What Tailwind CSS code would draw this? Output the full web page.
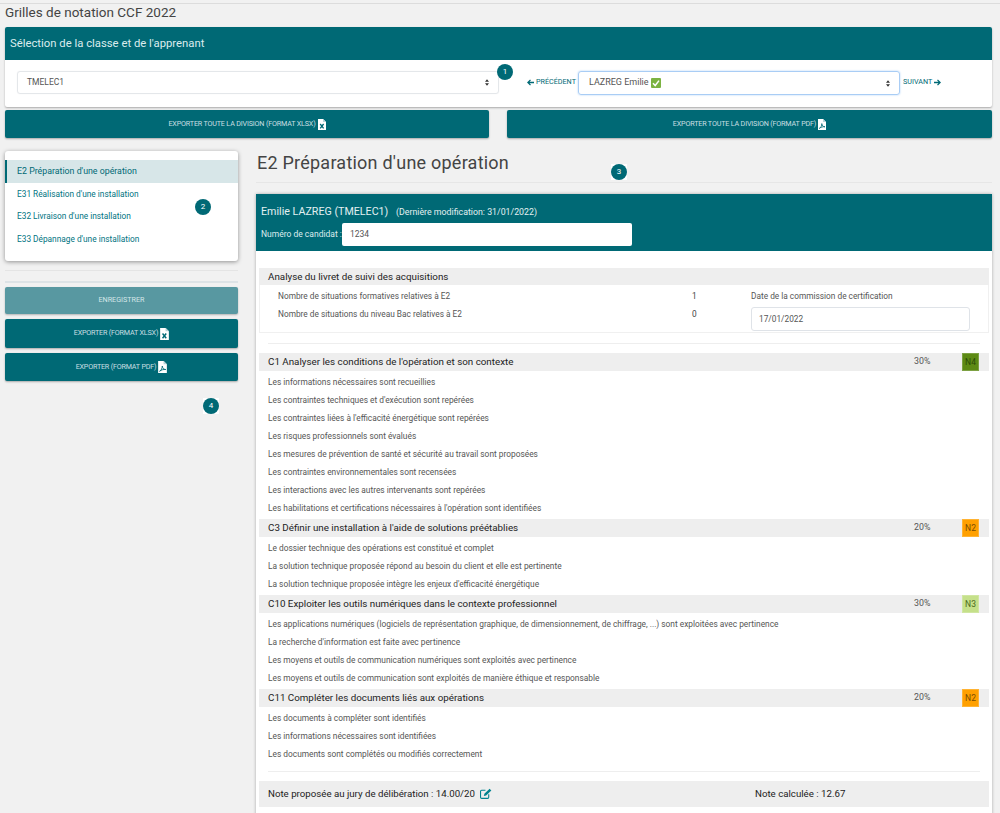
<!DOCTYPE html>
<html lang="fr">
<head>
<meta charset="utf-8"/>
<title>Grilles de notation CCF 2022</title>
<script src="https://cdn.jsdelivr.net/npm/@tailwindcss/browser@4"></script>
</head>
<body class="bg-[#f1f1f1]">
<div class="relative h-[813px] overflow-hidden font-['Roboto',sans-serif] text-[#555]">

  <!-- top rule -->
  <div class="h-[4px] border-b border-[#dcdcdc]"></div>

  <div class="pl-[5px] pr-[8px]">
    <h3 class="h-[23px] text-[13.5px] leading-[17px] text-[#444]">Grilles de notation CCF 2022</h3>

    <!-- classe / apprenant -->
    <div class="bg-white rounded-[2px] shadow-[0_1px_2px_rgba(0,0,0,0.3)] h-[80px]">
      <div class="h-[33px] bg-[#006975] text-[#dcecee] text-[11.3px] leading-[33px] pl-[5px] rounded-t-[2px]">Sélection de la classe et de l'apprenant</div>
      <div class="flex items-start pt-[11px]">
        <div class="ml-[12px] w-[482px] h-[23px] border border-[#e4e7ea] rounded-[3px] flex items-center justify-between pl-[9px] pr-[9px] text-[8.5px] shadow-[0_0_1px_rgba(0,0,0,0.1)]">
          <span>TMELEC1</span>
          <svg width="4" height="7" viewBox="0 0 5 8"><path d="M2.5 0L5 3H0zM2.5 8L0 5h5z" fill="#333"/></svg>
        </div>
        <a class="ml-[28px] w-[51px] h-[23px] flex items-center text-[7.2px] text-[#006975] whitespace-nowrap">
          <svg class="mr-[2px]" width="7" height="7" viewBox="0 0 8 8"><path d="M4 1L1 4l3 3M1.2 4H8" fill="none" stroke="#006975" stroke-width="1.5"/></svg>PRÉCÉDENT</a>
        <div class="w-[322px] h-[24px] border border-[#a9cdf5] rounded-[3px] shadow-[0_0_2px_#a9cdf5] flex items-center justify-between pl-[10px] pr-[9px] text-[9px]">
          <span class="flex items-center gap-[2px]">LAZREG Emilie
            <svg width="10" height="10" viewBox="0 0 10 10"><rect width="10" height="10" rx="1" fill="#7cb342"/><path d="M2 5.2l2.2 2.3L8 2.6" fill="none" stroke="#fff" stroke-width="1.5"/></svg>
          </span>
          <svg width="4" height="7" viewBox="0 0 5 8"><path d="M2.5 0L5 3H0zM2.5 8L0 5h5z" fill="#333"/></svg>
        </div>
        <a class="ml-[3px] h-[23px] flex items-center text-[7.2px] text-[#006975] whitespace-nowrap">SUIVANT
          <svg class="ml-[2px]" width="7" height="7" viewBox="0 0 8 8"><path d="M4 1l3 3-3 3M6.8 4H0" fill="none" stroke="#006975" stroke-width="1.5"/></svg></a>
      </div>
    </div>

    <!-- exports division -->
    <div class="flex justify-between mt-[3px]">
      <button class="w-[484px] h-[28px] bg-[#006975] text-[#c9dfe2] text-[7.2px] tracking-[-0.18px] rounded-[2px] shadow-[0_1px_2px_rgba(0,0,0,0.3)] flex items-center justify-center gap-[2px]">EXPORTER TOUTE LA DIVISION (FORMAT XLSX)
        <svg width="8" height="11" viewBox="0 0 8 11"><path d="M0 0h5l3 3v8H0z" fill="#fff"/><path d="M5 0v3h3" fill="#b9d4d8"/><path d="M2.2 5l3.4 4.4M5.6 5L2.2 9.4" stroke="#006975" stroke-width="1.3"/></svg>
      </button>
      <button class="w-[485px] h-[28px] bg-[#006975] text-[#c9dfe2] text-[7.2px] tracking-[-0.18px] rounded-[2px] shadow-[0_1px_2px_rgba(0,0,0,0.3)] flex items-center justify-center gap-[2px]">EXPORTER TOUTE LA DIVISION (FORMAT PDF)
        <svg width="8" height="11" viewBox="0 0 8 11"><path d="M0 0h5l3 3v8H0z" fill="#fff"/><path d="M5 0v3h3" fill="#b9d4d8"/><path d="M1.3 9.4C3 8.6 3.8 6.4 3.8 4.6 4 6.6 5.2 7.8 7 7.8 5 7.6 3 8 1.3 9.4z" fill="none" stroke="#006975" stroke-width="0.8"/></svg>
      </button>
    </div>

    <div class="flex mt-[13px]">
      <!-- sidebar -->
      <div class="w-[233px] shrink-0">
        <div class="h-[110px] bg-white rounded-[3px] shadow-[0_1px_4px_rgba(0,0,0,0.4)] pt-[9px] text-[8.3px] text-[#00737f]">
          <div class="h-[23px] leading-[23px] pl-[10px] bg-[#d7e6e8] border-l-2 border-[#006975] text-[#006975] text-[8.8px]">E2 Préparation d'une opération</div>
          <div class="h-[22px] leading-[22px] pl-[12px]">E31 Réalisation d'une installation</div>
          <div class="h-[23px] leading-[23px] pl-[12px]">E32 Livraison d'une installation</div>
          <div class="h-[22px] leading-[22px] pl-[12px]">E33 Dépannage d'une installation</div>
        </div>
        <div class="mt-[9px] h-[1px] bg-[#e4e4e4]"></div>
        <div class="mt-[10px] h-[2px] bg-[#dde3e6]"></div>
        <button class="mt-[4px] w-full h-[27px] bg-[#5898a1] text-[#d5e6e8] text-[7.2px] rounded-[2px] shadow-[0_1px_2px_rgba(0,0,0,0.25)]">ENREGISTRER</button>
        <button class="mt-[5px] w-full h-[29px] bg-[#006975] text-[#c9dfe2] text-[7.2px] tracking-[-0.2px] rounded-[2px] shadow-[0_1px_2px_rgba(0,0,0,0.3)] flex items-center justify-center gap-[2px]">EXPORTER (FORMAT XLSX)
          <svg width="9" height="12" viewBox="0 0 8 11"><path d="M0 0h5l3 3v8H0z" fill="#fff"/><path d="M5 0v3h3" fill="#b9d4d8"/><path d="M2.2 5l3.4 4.4M5.6 5L2.2 9.4" stroke="#006975" stroke-width="1.3"/></svg>
        </button>
        <button class="mt-[5px] w-full h-[28px] bg-[#006975] text-[#c9dfe2] text-[7.2px] tracking-[-0.2px] rounded-[2px] shadow-[0_1px_2px_rgba(0,0,0,0.3)] flex items-center justify-center gap-[2px]">EXPORTER (FORMAT PDF)
          <svg width="9" height="12" viewBox="0 0 8 11"><path d="M0 0h5l3 3v8H0z" fill="#fff"/><path d="M5 0v3h3" fill="#b9d4d8"/><path d="M1.3 9.4C3 8.6 3.8 6.4 3.8 4.6 4 6.6 5.2 7.8 7 7.8 5 7.6 3 8 1.3 9.4z" fill="none" stroke="#006975" stroke-width="0.8"/></svg>
        </button>
      </div>

      <!-- main -->
      <div class="ml-[18px] flex-1 min-w-0">
        <h2 class="h-[32px] text-[18px] leading-[24px] text-[#444] border-b border-[#e6e6e6] pl-[1px] tracking-[0.23px]">E2 Préparation d'une opération</h2>

        <div class="mt-[11px] bg-white h-[640px] shadow-[0_0_3px_rgba(0,0,0,0.3)]">
          <div class="h-[57px] bg-[#006975] text-white pl-[5px] pt-[10px]">
            <div class="text-[10.7px] leading-[15px] text-[#e3f0f1]">Emilie LAZREG (TMELEC1) <span class="ml-[5px] text-[8.8px]">(Dernière modification: 31/01/2022)</span></div>
            <div class="flex items-center mt-[3px] h-[23px] text-[8.5px] text-[#dcecee]">
              <span class="w-[81px]">Numéro de candidat :</span>
              <div class="w-[290px] h-[23px] bg-white rounded-[2px] text-[8.5px] text-[#555] leading-[23px] pl-[8px]">1234</div>
            </div>
          </div>

          <!-- analyse -->
          <div class="mt-[17px] mx-[3px] border border-[#f0f0f0] h-[65px]">
            <div class="h-[17px] bg-[#eee] text-[9.8px] text-[#222] leading-[17px] pl-[9px] -mt-[1px] -mx-[1px]">Analyse du livret de suivi des acquisitions</div>
            <div class="flex text-[8.3px]">
              <div class="w-[432px] pl-[18px] pt-[2px] leading-[18px]">
                <div>Nombre de situations formatives relatives à E2</div>
                <div>Nombre de situations du niveau Bac relatives à E2</div>
              </div>
              <div class="w-[59px] pt-[2px] leading-[18px] text-[#444]">
                <div>1</div>
                <div>0</div>
              </div>
              <div class="pt-[2px]">
                <div class="leading-[18px]">Date de la commission de certification</div>
                <div class="mt-[2px] w-[219px] h-[24px] border border-[#dfe3e8] rounded-[3px] text-[8.3px] leading-[22px] pl-[7px]">17/01/2022</div>
              </div>
            </div>
          </div>

          <div class="mx-[12px] mt-[10px] h-[1px] bg-[#eee]"></div>

          <!-- competences -->
          <div class="mt-[9px] mx-[3px] text-[8.35px]">
            <div class="flex items-center h-[18px] bg-[#eee] text-[9.8px] text-[#222] pl-[9px]">
              <span class="flex-1">C1 Analyser les conditions de l'opération et son contexte</span>
              <span class="w-[48px] text-[8.8px] text-[#555]">30%</span>
              <span class="w-[17px] h-[18px] mr-[10px] bg-[#5d8a14] border border-white/20 text-[8.5px] leading-[17px] text-center text-[#2c4a08]">N4</span>
            </div>
            <ul class="pl-[9px] pt-[2px] pb-[2px] leading-[18px]">
              <li>Les informations nécessaires sont recueillies</li>
              <li>Les contraintes techniques et d'exécution sont repérées</li>
              <li>Les contraintes liées à l'efficacité énergétique sont repérées</li>
              <li>Les risques professionnels sont évalués</li>
              <li>Les mesures de prévention de santé et sécurité au travail sont proposées</li>
              <li>Les contraintes environnementales sont recensées</li>
              <li>Les interactions avec les autres intervenants sont repérées</li>
              <li>Les habilitations et certifications nécessaires à l'opération sont identifiées</li>
            </ul>
            <div class="flex items-center h-[18px] bg-[#eee] text-[9.8px] text-[#222] pl-[9px]">
              <span class="flex-1">C3 Définir une installation à l'aide de solutions préétablies</span>
              <span class="w-[48px] text-[8.8px] text-[#555]">20%</span>
              <span class="w-[17px] h-[18px] mr-[10px] bg-[#ffa000] border border-white/20 text-[8.5px] leading-[17px] text-center text-[#7a4d00]">N2</span>
            </div>
            <ul class="pl-[9px] pt-[2px] pb-[2px] leading-[18px]">
              <li>Le dossier technique des opérations est constitué et complet</li>
              <li>La solution technique proposée répond au besoin du client et elle est pertinente</li>
              <li>La solution technique proposée intègre les enjeux d'efficacité énergétique</li>
            </ul>
            <div class="flex items-center h-[18px] bg-[#eee] text-[9.8px] text-[#222] pl-[9px]">
              <span class="flex-1">C10 Exploiter les outils numériques dans le contexte professionnel</span>
              <span class="w-[48px] text-[8.8px] text-[#555]">30%</span>
              <span class="w-[17px] h-[18px] mr-[10px] bg-[#c5e08a] border border-white/20 text-[8.5px] leading-[17px] text-center text-[#4c6a1a]">N3</span>
            </div>
            <ul class="pl-[9px] pt-[2px] pb-[2px] leading-[18px]">
              <li>Les applications numériques (logiciels de représentation graphique, de dimensionnement, de chiffrage, ...) sont exploitées avec pertinence</li>
              <li>La recherche d'information est faite avec pertinence</li>
              <li>Les moyens et outils de communication numériques sont exploités avec pertinence</li>
              <li>Les moyens et outils de communication sont exploités de manière éthique et responsable</li>
            </ul>
            <div class="flex items-center h-[18px] bg-[#eee] text-[9.8px] text-[#222] pl-[9px]">
              <span class="flex-1">C11 Compléter les documents liés aux opérations</span>
              <span class="w-[48px] text-[8.8px] text-[#555]">20%</span>
              <span class="w-[17px] h-[18px] mr-[10px] bg-[#ffa000] border border-white/20 text-[8.5px] leading-[17px] text-center text-[#7a4d00]">N2</span>
            </div>
            <ul class="pl-[9px] pt-[2px] leading-[18px]">
              <li>Les documents à compléter sont identifiés</li>
              <li>Les informations nécessaires sont identifiées</li>
              <li>Les documents sont complétés ou modifiés correctement</li>
            </ul>
          </div>

          <div class="mx-[12px] mt-[8px] h-[1px] bg-[#eee]"></div>

          <!-- note -->
          <div class="mt-[9px] mx-[3px] h-[26px] bg-[#eee] flex items-center text-[9.7px] text-[#222] pl-[9px]">
            <span class="w-[487px] flex items-center gap-[5px]">Note proposée au jury de délibération : 14.00/20
              <svg width="12" height="11" viewBox="0 0 11 10"><path d="M8 5.6V8.5a1 1 0 0 1-1 1H1.5a1 1 0 0 1-1-1V3a1 1 0 0 1 1-1H5" fill="none" stroke="#00838f" stroke-width="1"/><path d="M3.5 7.2L4 5.2 8.8.6l1.6 1.6L5.6 6.8z" fill="#00838f"/></svg>
            </span>
            <span>Note calculée : 12.67</span>
          </div>
        </div>
      </div>
    </div>
  </div>

  <!-- numbered markers -->
  <span class="absolute left-[497px] top-[64px] w-4 h-4 rounded-full bg-[#006975] text-white text-[8px] leading-4 text-center">1</span>
  <span class="absolute left-[195px] top-[199px] w-4 h-4 rounded-full bg-[#006975] text-white text-[8px] leading-4 text-center">2</span>
  <span class="absolute left-[611px] top-[164px] w-4 h-4 bg-white"><span class="block w-4 h-4 rounded-full bg-[#006975] text-white text-[8px] leading-4 text-center">3</span></span>
  <span class="absolute left-[203px] top-[398px] w-4 h-4 bg-white"><span class="block w-4 h-4 rounded-full bg-[#006975] text-white text-[8px] leading-4 text-center">4</span></span>
</div>
</body>
</html>
